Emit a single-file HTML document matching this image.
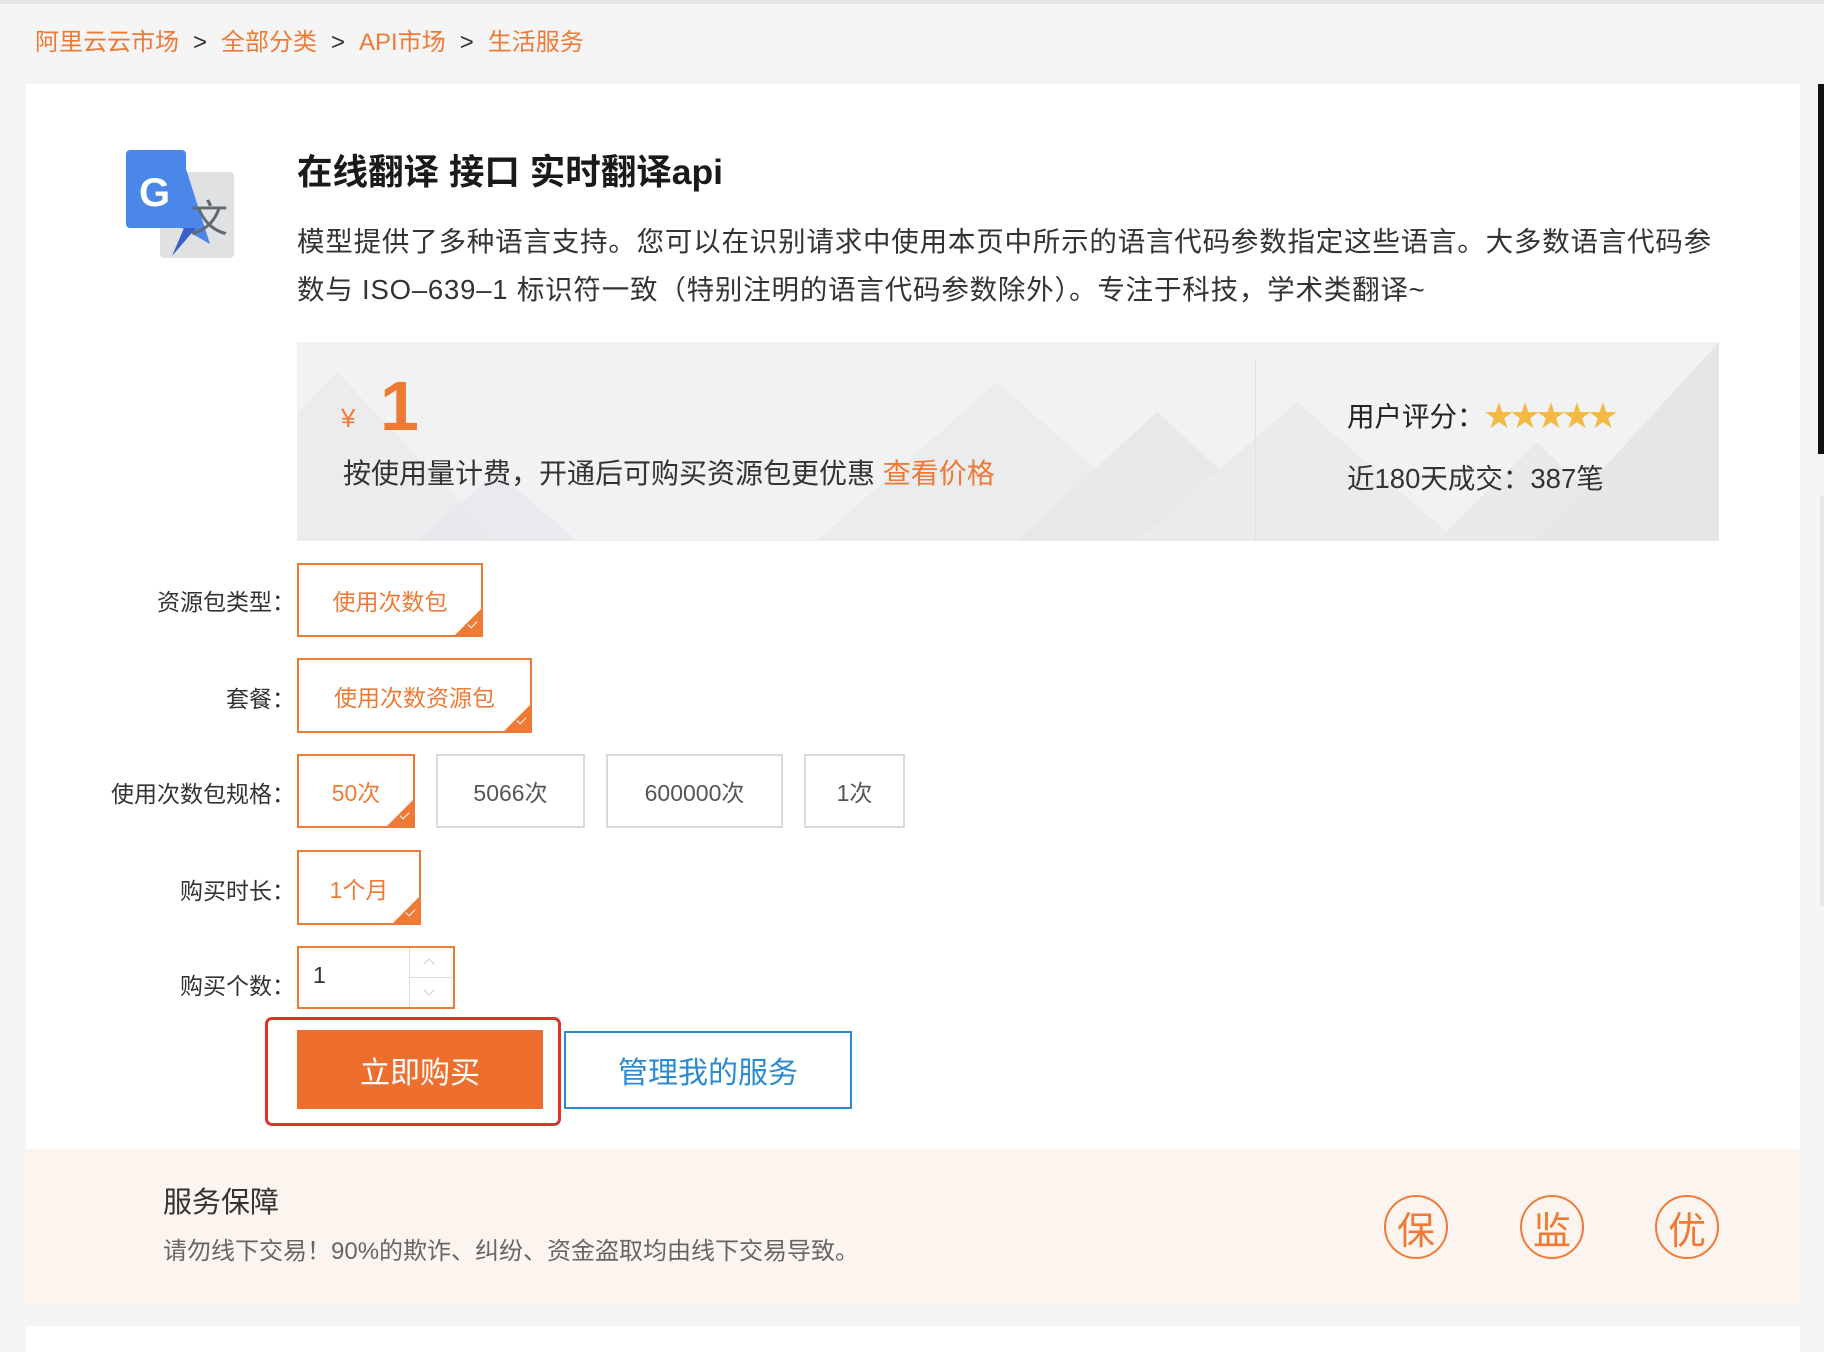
<!DOCTYPE html>
<html><head><meta charset="utf-8"><style>
*{margin:0;padding:0;box-sizing:border-box}
body{width:1824px;height:1352px;background:#f5f5f6;position:relative;overflow:hidden;font-family:"Liberation Sans","Noto Sans CJK SC",sans-serif;color:#333}
.a{position:absolute;white-space:nowrap}
.or{color:#ef7a36}
.lbl{position:absolute;right:1529px;font-size:23px;color:#333;transform:translateY(-50%)}
.opt{position:absolute;border:2px solid #ef7a36;color:#ef7a36;font-size:23px;display:flex;align-items:center;justify-content:center;background:#fff;overflow:hidden}
.opt.off{border-color:#d9d9d9;color:#555}
.opt .ck{position:absolute;right:0;bottom:0;width:0;height:0;border-left:26px solid transparent;border-bottom:26px solid #ef7a36}
.opt .ck:after{content:"";position:absolute;left:-13px;top:12px;width:8px;height:4px;border-left:1.5px solid #fff;border-bottom:1.5px solid #fff;transform:rotate(-45deg)}
.circ{position:absolute;width:64px;height:64px;border:2px solid #ef7a36;border-radius:50%;color:#ef7a36;font-size:38px;display:flex;align-items:center;justify-content:center;top:1195px}
.sep{color:#333;margin:0 14px}
</style></head><body>
<div class="a" style="left:0;top:0;width:1824px;height:4px;background:#e3e4e6"></div>
<div class="a" style="left:35px;top:28px;font-size:24px;line-height:30px"><span class="or">阿里云云市场</span><span class="sep">&gt;</span><span class="or">全部分类</span><span class="sep">&gt;</span><span class="or">API市场</span><span class="sep">&gt;</span><span class="or">生活服务</span></div>

<div class="a" style="left:26px;top:84px;width:1774px;height:1065px;background:#fff"></div>
<div class="a" style="left:1818px;top:84px;width:6px;height:370px;background:#111"></div>
<div class="a" style="left:1820px;top:496px;width:4px;height:410px;background:#e8e8e8"></div>

<svg class="a" style="left:124px;top:150px" width="114" height="114" viewBox="0 0 114 114">
<rect x="36" y="22" width="74" height="86" rx="4" fill="#dfe1e3"/>
<path d="M6 0 H56 L86 94 L58 78 Z" fill="#4a87e8"/>
<rect x="2" y="0" width="60" height="78" rx="4" fill="#4a87e8"/>
<path d="M60 78 L72 78 L48 106 Z" fill="#3a5fc8"/>
<text x="15" y="56" font-family="Liberation Sans" font-weight="bold" font-size="40" fill="#fff">G</text>
<text x="66" y="82" font-family="Noto Sans CJK SC" font-size="38" fill="#5f6b70">文</text>
</svg>

<div class="a" style="left:297px;top:151px;font-size:35.5px;font-weight:bold;color:#1a1a1a;line-height:42px">在线翻译 接口 实时翻译api</div>
<div class="a" style="left:297px;top:218px;font-size:27.5px;color:#333;line-height:48px;white-space:normal;width:1420px;letter-spacing:0.8px">模型提供了多种语言支持。您可以在识别请求中使用本页中所示的语言代码参数指定这些语言。大多数语言代码参数与 ISO–639–1 标识符一致（特别注明的语言代码参数除外）。专注于科技，学术类翻译~</div>

<div class="a" style="left:297px;top:342px;width:1422px;height:199px;background:#f1f2f3;overflow:hidden">
<svg width="1422" height="199" style="position:absolute;left:0;top:0">
<polygon points="40,30 200,199 -120,199" fill="#e9eaec" opacity=".7"/>
<polygon points="200,130 280,199 120,199" fill="#e6e7e9" opacity=".7"/>
<polygon points="700,40 880,199 520,199" fill="#ebecee"/>
<polygon points="860,70 1000,199 720,199" fill="#e7e8ea"/>
<polygon points="1000,60 1160,199 840,199" fill="#eaebed"/>
<polygon points="1240,100 1340,199 1140,199" fill="#e8e9eb"/>
<polygon points="1422,0 1422,199 1240,199" fill="#e5e6e8"/>
</svg>
</div>
<div class="a" style="left:1255px;top:360px;width:1px;height:181px;background:#e2e3e5"></div>
<div class="a or" style="left:341px;top:398px;font-size:26px;line-height:40px">¥</div>
<div class="a or" style="left:380px;top:366px;font-size:70px;font-weight:bold;line-height:80px">1</div>
<div class="a" style="left:343px;top:456px;font-size:28px;line-height:36px;color:#333">按使用量计费，开通后可购买资源包更优惠 <span class="or">查看价格</span></div>
<div class="a" style="left:1347px;top:399px;font-size:27.5px;line-height:36px;color:#222">用户评分：<span style="color:#f4b942;font-size:29px;letter-spacing:-3px">★★★★★</span></div>
<div class="a" style="left:1347px;top:461px;font-size:27.5px;line-height:36px;color:#333">近180天成交：387笔</div>

<div class="lbl" style="top:600px">资源包类型：</div>
<div class="lbl" style="top:697px">套餐：</div>
<div class="lbl" style="top:792px">使用次数包规格：</div>
<div class="lbl" style="top:889px">购买时长：</div>
<div class="lbl" style="top:984px">购买个数：</div>

<div class="opt" style="left:297px;top:563px;width:186px;height:74px">使用次数包<i class="ck"></i></div>
<div class="opt" style="left:297px;top:658px;width:235px;height:75px">使用次数资源包<i class="ck"></i></div>
<div class="opt" style="left:297px;top:754px;width:118px;height:74px">50次<i class="ck"></i></div>
<div class="opt off" style="left:436px;top:754px;width:149px;height:74px">5066次</div>
<div class="opt off" style="left:606px;top:754px;width:177px;height:74px">600000次</div>
<div class="opt off" style="left:804px;top:754px;width:101px;height:74px">1次</div>
<div class="opt" style="left:297px;top:850px;width:124px;height:75px">1个月<i class="ck"></i></div>

<div class="a" style="left:297px;top:946px;width:158px;height:63px;border:2px solid #ef7a36;background:#fff">
<div class="a" style="left:14px;top:14px;font-size:23px;color:#333">1</div>
<div class="a" style="left:110px;top:0;width:1px;height:59px;background:#ddd"></div>
<div class="a" style="left:110px;top:29px;width:44px;height:1px;background:#ddd"></div>
<div class="a" style="left:126px;top:12px;width:8px;height:8px;border-left:1px solid #ccc;border-top:1px solid #ccc;transform:rotate(45deg)"></div>
<div class="a" style="left:126px;top:38px;width:8px;height:8px;border-right:1px solid #ccc;border-bottom:1px solid #ccc;transform:rotate(45deg)"></div>
</div>

<div class="a" style="left:265px;top:1017px;width:296px;height:109px;border:3px solid #e0312a;border-radius:7px"></div>
<div class="a" style="left:297px;top:1030px;width:246px;height:79px;background:#ee6f2d;color:#fff;font-size:30px;display:flex;align-items:center;justify-content:center">立即购买</div>
<div class="a" style="left:564px;top:1031px;width:288px;height:78px;border:2px solid #2a8bd0;color:#2a8bd0;font-size:30px;display:flex;align-items:center;justify-content:center;background:#fff">管理我的服务</div>

<div class="a" style="left:26px;top:1149px;width:1774px;height:156px;background:#fcf4ee"></div>
<div class="a" style="left:163px;top:1185px;font-size:29px;line-height:36px;color:#333">服务保障</div>
<div class="a" style="left:163px;top:1237px;font-size:24px;line-height:30px;color:#666">请勿线下交易！90%的欺诈、纠纷、资金盗取均由线下交易导致。</div>
<div class="circ" style="left:1384px">保</div>
<div class="circ" style="left:1520px">监</div>
<div class="circ" style="left:1655px">优</div>

<div class="a" style="left:26px;top:1326px;width:1774px;height:26px;background:#fff"></div>
</body></html>
